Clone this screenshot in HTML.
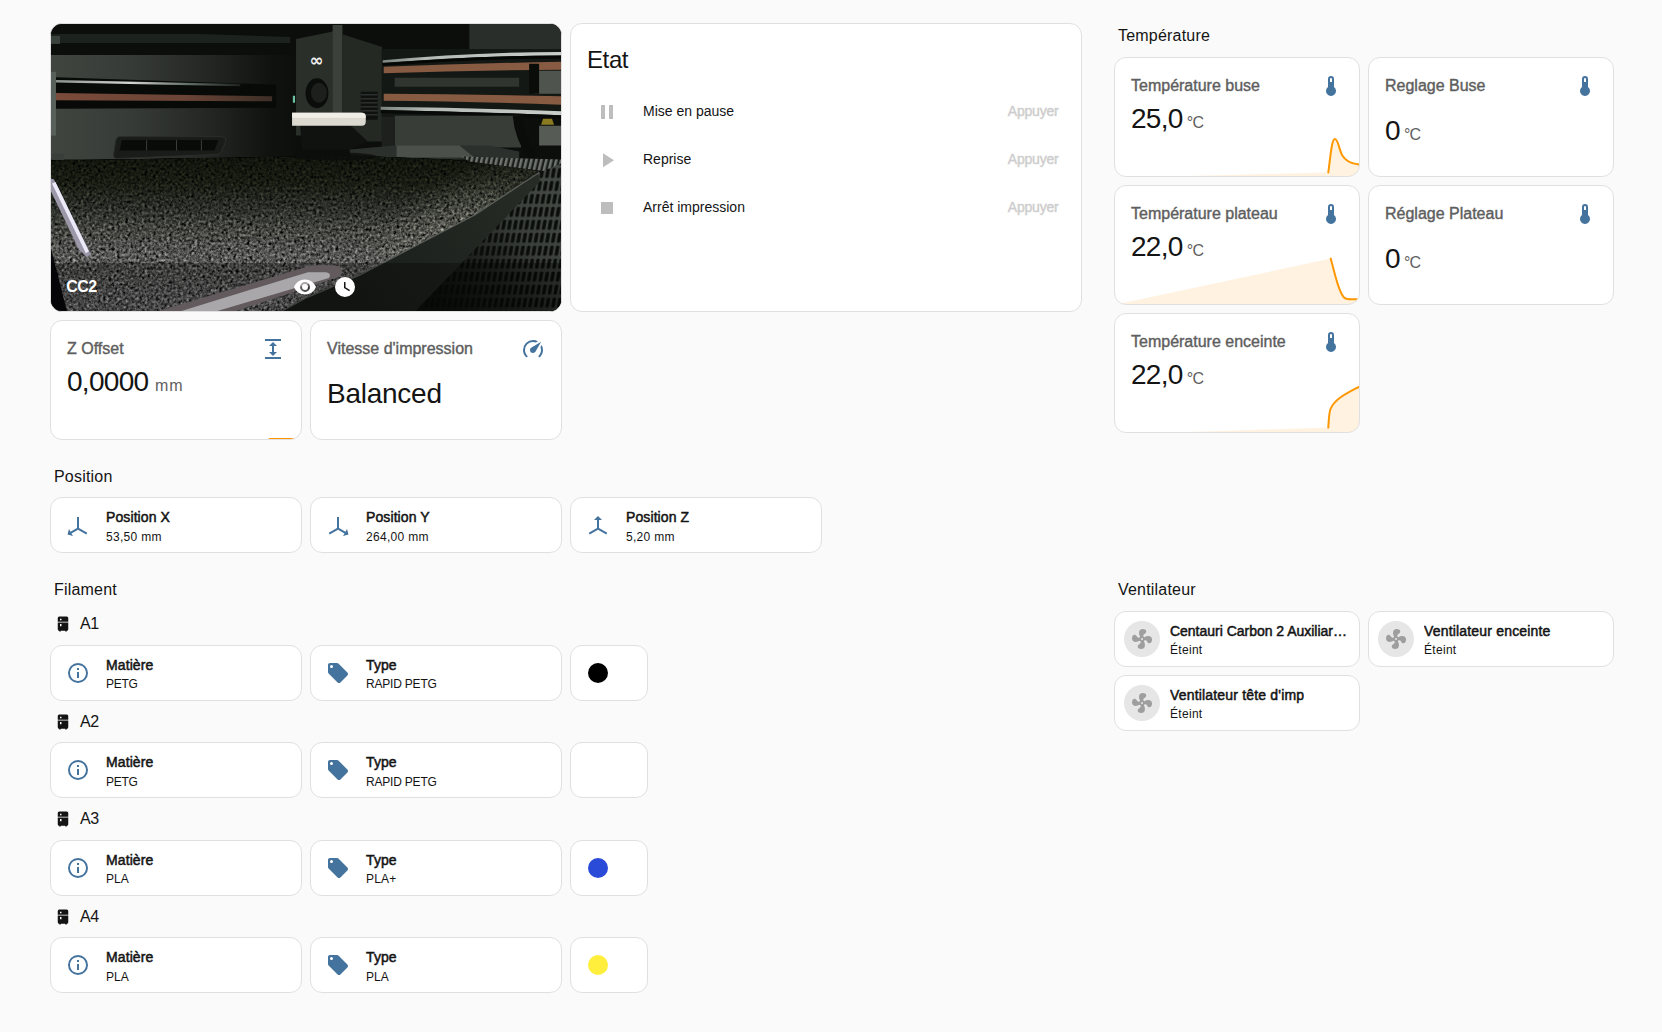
<!DOCTYPE html>
<html lang="fr">
<head>
<meta charset="utf-8">
<title>CC2</title>
<style>
*{box-sizing:border-box;margin:0;padding:0}
html,body{width:1662px;height:1032px;overflow:hidden;background:#fafafa}
body{position:relative;font-family:"Liberation Sans",sans-serif;color:#141414}
.card{position:absolute;background:#fff;border:1px solid #e0e0e0;border-radius:12px;overflow:hidden}
.h{position:absolute;font-size:16px;line-height:24px;white-space:nowrap;color:#141414;letter-spacing:.2px}
.t{position:absolute;white-space:nowrap}
.title{font-size:24px;line-height:40px;letter-spacing:-.4px}
.rown{font-size:14px;line-height:20px}
.press{font-size:14px;line-height:20px;color:#cdcdcd;-webkit-text-stroke:.4px #cdcdcd;letter-spacing:-.2px}
.camt{font-size:16px;line-height:24px;color:#fff;font-weight:700;letter-spacing:-.6px}
.foot{position:absolute;left:0;right:0;bottom:0;height:48px;background:rgba(0,0,0,.3)}
.tile .ic{position:absolute;left:15px;top:15px;width:24px;height:24px}
.tile .nm{position:absolute;left:55px;top:9px;font-size:14px;line-height:20px;-webkit-text-stroke:.5px #141414;letter-spacing:.1px;white-space:nowrap}
.tile .st{position:absolute;left:55px;top:30px;font-size:12px;line-height:16px;white-space:nowrap;letter-spacing:.3px}
.fan .circ{position:absolute;left:9px;top:9px;width:36px;height:36px;border-radius:50%;background:#e6e6e6;display:flex;align-items:center;justify-content:center}
.fan .nm{max-width:186px;overflow:hidden}
.dot{position:absolute;left:17px;top:17px;width:20px;height:20px;border-radius:50%}
.sens .nm{position:absolute;left:16px;top:15.5px;-webkit-text-stroke:.4px #5e5e5e;font-size:16px;line-height:24px;color:#5e5e5e;white-space:nowrap}
.sens .ic{position:absolute;right:16px;top:16px;width:24px;height:24px}
.sens .val{position:absolute;left:16px;font-size:28px;line-height:32px;white-space:nowrap;letter-spacing:-.7px}
.sens .val span{font-size:16px;color:#5e5e5e;margin-left:4px;letter-spacing:-.7px}
.sens .g{position:absolute;left:0;bottom:0}
</style>
</head>
<body>
<div class="card" id="cam" style="left:50px;top:23px;width:512px;height:289px;border-color:#e0e0e0;background:#1b1d1b">
<svg id="camsvg" width="510" height="287" viewBox="0 0 512 288" preserveAspectRatio="none" style="position:absolute;left:0;top:0">
<defs>
<linearGradient id="wallg" x1="0" x2="1" y1="0" y2="0"><stop offset="0" stop-color="#40453f"/><stop offset=".33" stop-color="#373b38"/><stop offset=".66" stop-color="#222522"/><stop offset=".9" stop-color="#0f120f"/><stop offset="1" stop-color="#0c0f0c"/></linearGradient>
<linearGradient id="bedg" x1="0" x2="0" y1="133" y2="288" gradientUnits="userSpaceOnUse"><stop offset="0" stop-color="#10140c"/><stop offset=".17" stop-color="#181c13"/><stop offset=".33" stop-color="#2b2e28"/><stop offset=".47" stop-color="#43443f"/><stop offset=".64" stop-color="#555554"/><stop offset="1" stop-color="#666666"/></linearGradient>
<linearGradient id="railhl" x1="0" x2="1"><stop offset="0" stop-color="#8c918e"/><stop offset=".4" stop-color="#d6d6d2"/><stop offset=".7" stop-color="#66726c"/><stop offset="1" stop-color="#1c211e"/></linearGradient>
<linearGradient id="copl" x1="0" x2="1"><stop offset="0" stop-color="#7a4a3a"/><stop offset=".6" stop-color="#6a4436"/><stop offset="1" stop-color="#3c2e26"/></linearGradient>
<filter id="speck" x="0" y="0" width="100%" height="100%" color-interpolation-filters="sRGB">
<feTurbulence type="fractalNoise" baseFrequency="0.36" numOctaves="2" seed="7" result="n"/>
<feColorMatrix in="n" type="matrix" values="0.8 0.8 0.8 0 -0.7  0.8 0.8 0.8 0 -0.7  0.8 0.8 0.8 0 -0.7  0 0 0 0 1" result="g"/>
<feGaussianBlur in="g" stdDeviation="0.55" result="gb"/><feComposite in="gb" in2="SourceGraphic" operator="arithmetic" k1="2" k2="0" k3="0" k4="0"/>
</filter>
<pattern id="mesh" width="5.8" height="13" patternUnits="userSpaceOnUse" patternTransform="skewX(-10)"><rect width="5.8" height="13" fill="#424742"/><rect x="1.2" y="1.3" width="3.4" height="10.4" rx="1.6" fill="#0a0c0a"/></pattern>
<pattern id="ribs" width="5" height="14" patternUnits="userSpaceOnUse" patternTransform="skewX(-14)"><rect width="5" height="14" fill="#1a1d1a"/><rect x="0" width="2.6" height="14" fill="#70746f"/></pattern>
<linearGradient id="meshd" x1="512" y1="190" x2="395" y2="280" gradientUnits="userSpaceOnUse"><stop offset="0" stop-color="#0a0c0a" stop-opacity="0"/><stop offset=".3" stop-color="#0a0c0a" stop-opacity=".15"/><stop offset=".62" stop-color="#0a0c0a" stop-opacity=".6"/><stop offset="1" stop-color="#0a0c0a" stop-opacity=".92"/></linearGradient>
<linearGradient id="rodg" x1="332" x2="512" y1="0" y2="0" gradientUnits="userSpaceOnUse"><stop offset="0" stop-color="#7c8480"/><stop offset=".25" stop-color="#b4bab6"/><stop offset="1" stop-color="#c9cecb"/></linearGradient>
<linearGradient id="bandg" x1="490" y1="150" x2="300" y2="288" gradientUnits="userSpaceOnUse"><stop offset="0" stop-color="#272c27"/><stop offset="1" stop-color="#191d19"/></linearGradient>
<radialGradient id="bedhl" cx="405" cy="214" r="1" gradientUnits="userSpaceOnUse" gradientTransform="translate(405 214) rotate(-30) scale(135 60) translate(-405 -214)"><stop offset="0" stop-color="#74746c" stop-opacity=".62"/><stop offset=".5" stop-color="#66665e" stop-opacity=".36"/><stop offset="1" stop-color="#55554e" stop-opacity="0"/></radialGradient>
</defs>
<rect width="512" height="288" fill="#0b0e0b"/>
<!-- top band lighter strip -->
<path d="M0 10H150L240 13V19L150 19H0Z" fill="#1c221e"/>
<rect x="0" y="12" width="9" height="8" fill="#3a423c"/>
<!-- wall left -->
<path d="M0 31H245V136H0Z" fill="url(#wallg)"/>
<rect x="0" y="48" width="5" height="64" fill="#59605b"/><rect x="1" y="130" width="12" height="8" fill="#3a3e3a"/>
<!-- left rail -->
<path d="M5 53.5L226 61V84L5 85Z" fill="#070a07"/>
<path d="M5 56.3L190 60.2V62.4L5 58.7Z" fill="url(#railhl)"/>
<path d="M5 69.3L222 72.6V77.6L5 76.6Z" fill="url(#copl)"/>
<!-- vent -->
<path d="M69 113H170Q177 113 175 119L171 128Q170 131 164 131L66 135Q62 135 63 130L65 117Q66 113 69 113Z" fill="#191c19" stroke="#2a2e2a" stroke-width="1"/>
<path d="M71 116.5H168L164 127H69Z" fill="#090b09"/><path d="M96 116.5V127M126 116.5V127M151 116.5V127" stroke="#3a3e3a" stroke-width="1"/>
<!-- printhead -->
<path d="M246 15L283 7.5V112H246Z" fill="#2a2f2a"/>
<path d="M282.7 1H292.6V113H282.7Z" fill="#3b403a"/>
<path d="M292.6 10.4L332.5 23V118H292.6Z" fill="#242924"/>
<ellipse cx="267" cy="69.5" rx="11.5" ry="15" fill="#0b0d0b"/><ellipse cx="269" cy="69" rx="8" ry="10" fill="#1c1f1c"/><rect x="242.8" y="72" width="2.2" height="7" fill="#6cc4a4"/>
<path d="M311 68H328V96H311Z" fill="#0f110f"/>
<path d="M311 71H328M311 75H328M311 79H328M311 83H328M311 87H328M311 91H328" stroke="#2c302c" stroke-width="1.4"/>
<text x="266.5" y="42.5" font-family="'DejaVu Sans','Liberation Sans',sans-serif" font-size="17" font-weight="bold" fill="#f2f2f2" text-anchor="middle">∞</text>
<path d="M250 101H300L318 118L300 126H252Z" fill="#101210"/>
<path d="M242 89H312Q316 89 316 93V98Q316 102 312 102H242Z" fill="#dcdad0"/>
<path d="M242 89H312Q316 89 316 93V94H242Z" fill="#f0eee6"/>
<!-- right: top area -->
<path d="M420 0H512V25H420Z" fill="#2a2e2a"/>
<path d="M332 25H512V93H332Z" fill="#141814"/>
<!-- upper rod -->
<path d="M333 36.5Q420 28.5 512 28V31.5Q420 32 333 39Z" fill="url(#rodg)"/>
<path d="M333 39.5Q420 32 512 31.5V34.5Q420 35 333 42Z" fill="#050705"/>
<!-- belts -->
<path d="M334 43Q420 39.5 512 38V46Q420 46.5 334 49.5Z" fill="#875a42"/>
<path d="M345 54H470V63H345Z" fill="#30352f"/>
<path d="M334 70Q420 70.5 512 72.5V81Q420 77.5 334 77Z" fill="#875a42"/>
<!-- right mech parts -->
<path d="M485 47H512V70H485Z" fill="#50544e"/>
<path d="M480 40H490V70H480Z" fill="#0a0c0a"/>
<!-- lower rod -->
<path d="M331 83Q420 84 512 87.5V91.5Q420 88 331 86Z" fill="url(#rodg)"/>
<path d="M331 86.5Q420 88 512 91.5V95Q420 91.5 331 89.5Z" fill="#080a08"/>
<!-- panel below rod -->
<path d="M345 92H472V124H345Z" fill="#383d38"/>
<path d="M332 93H345V124H332Z" fill="#1d201d"/>
<path d="M490 102H512V122H490Z" fill="#575b55"/>
<path d="M468 92Q470 115 484 134" stroke="#0a0c0a" stroke-width="9" fill="none"/>
<path d="M494 95L503 95L505 101L492 101Z" fill="#8a7a20"/>
<!-- platform slab -->
<path d="M300 126L345 122H440L470 128V136H300Z" fill="#2c302c"/>
<path d="M347 122H410L425 134H347Z" fill="#4c504b"/>
<!-- bed -->
<g filter="url(#speck)"><path d="M0 137L120 135L245 133L300 132L400 136L488 147Q492 148 489 150L425 192L371 220L310 252L256 275L232 288H0Z" fill="url(#bedg)"/><path d="M0 137L120 135L245 133L300 132L400 136L488 147Q492 148 489 150L425 192L371 220L310 252L256 275L232 288H0Z" fill="url(#bedhl)"/></g>
<!-- printhead shadow on bed -->
<ellipse cx="285" cy="133" rx="42" ry="4" fill="#0c0e0c" opacity=".8"/>
<!-- rib grid -->
<path d="M412 133L512 136V150L490 147L420 138Z" fill="url(#ribs)"/>
<!-- frame band & mesh -->
<path d="M488 150L512 140V288H355Z" fill="url(#mesh)"/><path d="M488 150L512 140V288H355Z" fill="url(#meshd)"/>
<path d="M489 150L425 192L371 220L310 252L256 275L232 288H366L390 263L491 158Z" fill="url(#bandg)"/>
<path d="M490 149L425 192L371 220L310 252L256 275L232 288" stroke="#5a5f5a" stroke-width="1.2" fill="none"/>
<!-- handle -->
<path d="M262 242H285Q292 243 292 248Q292 253 286 255L185 288H108Z" fill="#8e8286"/>
<path d="M258 249H276Q282 250 279 255L167 288H131Z" fill="#f4f0f4"/>
<!-- white streak left -->
<path d="M0 155L3 156L40 231L36 234L28 226L0 168Z" fill="#9c98aa"/><path d="M1 160L4.5 158.5L38 228L35 230Z" fill="#eceaf8"/>
<path d="M0 225L16 288H0Z" fill="#08080c"/>
</svg>

<div class="foot"></div>
<div class="t camt" style="left:15.3px;top:251px">CC2</div>
<svg class="" viewBox="0 0 24 24" style="position:absolute;left:241.7px;top:251px;width:24px;height:24px"><path fill="#fff" d="M12,9A3,3 0 0,0 9,12A3,3 0 0,0 12,15A3,3 0 0,0 15,12A3,3 0 0,0 12,9M12,17A5,5 0 0,1 7,12A5,5 0 0,1 12,7A5,5 0 0,1 17,12A5,5 0 0,1 12,17M12,4.5C7,4.5 2.73,7.61 1,12C2.73,16.39 7,19.5 12,19.5C17,19.5 21.27,16.39 23,12C21.27,7.61 17,4.5 12,4.5Z"/></svg>
<svg class="" viewBox="0 0 24 24" style="position:absolute;left:281.7px;top:250.5px;width:24px;height:24px"><path fill="#fff" d="M12,2A10,10 0 0,0 2,12A10,10 0 0,0 12,22A10,10 0 0,0 22,12A10,10 0 0,0 12,2M16.2,16.2L11,13V7H12.5V12.2L17,14.9L16.2,16.2Z"/></svg>
</div>
<div class="card" id="etat" style="left:570px;top:23px;width:512px;height:289px">
<div class="t title" style="left:16px;top:16px">Etat</div>
<svg class="" viewBox="0 0 24 24" style="position:absolute;left:24px;top:76px;width:24px;height:24px"><path fill="#bdbdbd" d="M14,19H18V5H14M6,19H10V5H6V19Z"/></svg>
<div class="t rown" style="left:72px;top:77px">Mise en pause</div>
<div class="t press" style="right:22.5px;top:77px">Appuyer</div>
<svg class="" viewBox="0 0 24 24" style="position:absolute;left:24px;top:124px;width:24px;height:24px"><path fill="#bdbdbd" d="M8,5.14V19.14L19,12.14L8,5.14Z"/></svg>
<div class="t rown" style="left:72px;top:125px">Reprise</div>
<div class="t press" style="right:22.5px;top:125px">Appuyer</div>
<svg class="" viewBox="0 0 24 24" style="position:absolute;left:24px;top:172px;width:24px;height:24px"><path fill="#bdbdbd" d="M18,18H6V6H18V18Z"/></svg>
<div class="t rown" style="left:72px;top:173px">Arrêt impression</div>
<div class="t press" style="right:22.5px;top:173px">Appuyer</div>
</div>
<div class="card sens" id="zoff" style="left:50px;top:320px;width:252px;height:120px">
<div class="nm">Z Offset</div><svg class="ic" viewBox="0 0 24 24" style=""><path fill="#44739e" d="M13,9V15H16L12,19L8,15H11V9H8L12,5L16,9H13M4,2H20V4H4V2M4,20H20V22H4V20Z"/></svg>
<div class="val" style="top:44.5px">0,0000<span style="letter-spacing:.9px;margin-left:6.5px">mm</span></div>
<svg class="g" width="250" height="30" viewBox="0 0 250 30"><path d="M217.8 29.5H243" stroke="#ff9800" stroke-width="1.2" fill="none"/></svg>
</div>
<div class="card sens" id="vit" style="left:310px;top:320px;width:252px;height:120px">
<div class="nm">Vitesse d'impression</div><svg class="ic" viewBox="0 0 24 24" style=""><path fill="#44739e" d="M12,16A3,3 0 0,1 9,13C9,11.88 9.61,10.9 10.5,10.39L20.21,4.77L14.68,14.35C14.18,15.33 13.17,16 12,16M12,3C13.81,3 15.5,3.5 16.97,4.32L14.87,5.53C14,5.19 13,5 12,5A8,8 0 0,0 4,13C4,15.21 4.89,17.21 6.34,18.65H6.35C6.74,19.04 6.74,19.67 6.35,20.06C5.96,20.45 5.32,20.45 4.93,20.07V20.07C3.12,18.26 2,15.76 2,13A10,10 0 0,1 12,3M22,13C22,15.76 20.88,18.26 19.07,20.07V20.07C18.68,20.45 18.05,20.45 17.66,20.06C17.27,19.67 17.27,19.04 17.66,18.65V18.65C19.11,17.2 20,15.21 20,13C20,12 19.81,11 19.46,10.1L20.67,8C21.5,9.5 22,11.18 22,13Z"/></svg>
<div class="val" style="top:56.5px;letter-spacing:-.25px">Balanced</div>
</div>
<div class="h" style="left:54px;top:465px">Position</div>
<div class="h" style="left:54px;top:578px">Filament</div>
<div class="h" style="left:1118px;top:24px">Température</div>
<div class="h" style="left:1118px;top:578px">Ventilateur</div>
<div class="card tile" style="left:50px;top:497px;width:252px;height:56px"><svg class="ic" viewBox="0 0 24 24" style=""><path fill="#44739e" d="M1.5,21.55L3,16.08L4.47,18.66L11,14.9V4H13V14.9L21.27,19.66L20.27,21.4L12,16.63L5.47,20.4L7,23.01L1.5,21.55Z"/></svg><div class="nm">Position X</div><div class="st" style="top:31px;letter-spacing:0.3px">53,50 mm</div></div>
<div class="card tile" style="left:310px;top:497px;width:252px;height:56px"><svg class="ic" viewBox="0 0 24 24" style=""><path fill="#44739e" d="M22.5,21.55L17,23.01L18.53,20.4L12,16.63L3.73,21.4L2.73,19.66L11,14.9V4H13V14.9L19.53,18.66L21,16.08L22.5,21.55Z"/></svg><div class="nm">Position Y</div><div class="st" style="top:31px;letter-spacing:0.3px">264,00 mm</div></div>
<div class="card tile" style="left:570px;top:497px;width:252px;height:56px"><svg class="ic" viewBox="0 0 24 24" style=""><path fill="#44739e" d="M12,3L16,7H13V14.9L21.27,19.66L20.27,21.4L12,16.63L3.73,21.4L2.73,19.66L11,14.9V7H8L12,3Z"/></svg><div class="nm">Position Z</div><div class="st" style="top:31px;letter-spacing:0.3px">5,20 mm</div></div>
<svg class="" viewBox="0 0 24 24" style="position:absolute;left:54px;top:615px;width:18px;height:18px"><path fill="#141414" d="M7,2H17A2,2 0 0,1 19,4V9H5V4A2,2 0 0,1 7,2M19,19A2,2 0 0,1 17,21V22H15V21H9V22H7V21A2,2 0 0,1 5,19V10H19V19M8,5V7H10V5H8M8,12V15H10V12H8Z"/></svg>
<div class="h" style="left:80px;top:612px;letter-spacing:-0.5px">A1</div>
<div class="card tile" style="left:50px;top:645px;width:252px;height:56px"><svg class="ic" viewBox="0 0 24 24" style=""><path fill="#44739e" d="M11,9H13V7H11M12,20C7.59,20 4,16.41 4,12C4,7.59 7.59,4 12,4C16.41,4 20,7.59 20,12C20,16.41 16.41,20 12,20M12,2A10,10 0 0,0 2,12A10,10 0 0,0 12,22A10,10 0 0,0 22,12A10,10 0 0,0 12,2M11,17H13V11H11V17Z"/></svg><div class="nm">Matière</div><div class="st" style="top:30px;letter-spacing:-0.3px">PETG</div></div>
<div class="card tile" style="left:310px;top:645px;width:252px;height:56px"><svg class="ic" viewBox="0 0 24 24" style=""><path fill="#44739e" d="M5.5,7A1.5,1.5 0 0,1 4,5.5A1.5,1.5 0 0,1 5.5,4A1.5,1.5 0 0,1 7,5.5A1.5,1.5 0 0,1 5.5,7M21.41,11.58L12.41,2.58C12.05,2.22 11.55,2 11,2H4C2.89,2 2,2.89 2,4V11C2,11.55 2.22,12.05 2.59,12.41L11.58,21.41C11.95,21.77 12.45,22 13,22C13.55,22 14.05,21.77 14.41,21.41L21.41,14.41C21.78,14.05 22,13.55 22,13C22,12.44 21.77,11.94 21.41,11.58Z"/></svg><div class="nm">Type</div><div class="st" style="top:30px;letter-spacing:-0.2px">RAPID PETG</div></div>
<div class="card" style="left:570px;top:645px;width:78px;height:56px"><div class="dot" style="background:#000000"></div></div>
<svg class="" viewBox="0 0 24 24" style="position:absolute;left:54px;top:712.5px;width:18px;height:18px"><path fill="#141414" d="M7,2H17A2,2 0 0,1 19,4V9H5V4A2,2 0 0,1 7,2M19,19A2,2 0 0,1 17,21V22H15V21H9V22H7V21A2,2 0 0,1 5,19V10H19V19M8,5V7H10V5H8M8,12V15H10V12H8Z"/></svg>
<div class="h" style="left:80px;top:710.0px;letter-spacing:-0.5px">A2</div>
<div class="card tile" style="left:50px;top:742px;width:252px;height:56px"><svg class="ic" viewBox="0 0 24 24" style=""><path fill="#44739e" d="M11,9H13V7H11M12,20C7.59,20 4,16.41 4,12C4,7.59 7.59,4 12,4C16.41,4 20,7.59 20,12C20,16.41 16.41,20 12,20M12,2A10,10 0 0,0 2,12A10,10 0 0,0 12,22A10,10 0 0,0 22,12A10,10 0 0,0 12,2M11,17H13V11H11V17Z"/></svg><div class="nm">Matière</div><div class="st" style="top:31px;letter-spacing:-0.3px">PETG</div></div>
<div class="card tile" style="left:310px;top:742px;width:252px;height:56px"><svg class="ic" viewBox="0 0 24 24" style=""><path fill="#44739e" d="M5.5,7A1.5,1.5 0 0,1 4,5.5A1.5,1.5 0 0,1 5.5,4A1.5,1.5 0 0,1 7,5.5A1.5,1.5 0 0,1 5.5,7M21.41,11.58L12.41,2.58C12.05,2.22 11.55,2 11,2H4C2.89,2 2,2.89 2,4V11C2,11.55 2.22,12.05 2.59,12.41L11.58,21.41C11.95,21.77 12.45,22 13,22C13.55,22 14.05,21.77 14.41,21.41L21.41,14.41C21.78,14.05 22,13.55 22,13C22,12.44 21.77,11.94 21.41,11.58Z"/></svg><div class="nm">Type</div><div class="st" style="top:31px;letter-spacing:-0.2px">RAPID PETG</div></div>
<div class="card" style="left:570px;top:742px;width:78px;height:56px"><div class="dot" style="background:#ffffff"></div></div>
<svg class="" viewBox="0 0 24 24" style="position:absolute;left:54px;top:810px;width:18px;height:18px"><path fill="#141414" d="M7,2H17A2,2 0 0,1 19,4V9H5V4A2,2 0 0,1 7,2M19,19A2,2 0 0,1 17,21V22H15V21H9V22H7V21A2,2 0 0,1 5,19V10H19V19M8,5V7H10V5H8M8,12V15H10V12H8Z"/></svg>
<div class="h" style="left:80px;top:807px;letter-spacing:-0.5px">A3</div>
<div class="card tile" style="left:50px;top:840px;width:252px;height:56px"><svg class="ic" viewBox="0 0 24 24" style=""><path fill="#44739e" d="M11,9H13V7H11M12,20C7.59,20 4,16.41 4,12C4,7.59 7.59,4 12,4C16.41,4 20,7.59 20,12C20,16.41 16.41,20 12,20M12,2A10,10 0 0,0 2,12A10,10 0 0,0 12,22A10,10 0 0,0 22,12A10,10 0 0,0 12,2M11,17H13V11H11V17Z"/></svg><div class="nm">Matière</div><div class="st" style="top:30px;letter-spacing:0px">PLA</div></div>
<div class="card tile" style="left:310px;top:840px;width:252px;height:56px"><svg class="ic" viewBox="0 0 24 24" style=""><path fill="#44739e" d="M5.5,7A1.5,1.5 0 0,1 4,5.5A1.5,1.5 0 0,1 5.5,4A1.5,1.5 0 0,1 7,5.5A1.5,1.5 0 0,1 5.5,7M21.41,11.58L12.41,2.58C12.05,2.22 11.55,2 11,2H4C2.89,2 2,2.89 2,4V11C2,11.55 2.22,12.05 2.59,12.41L11.58,21.41C11.95,21.77 12.45,22 13,22C13.55,22 14.05,21.77 14.41,21.41L21.41,14.41C21.78,14.05 22,13.55 22,13C22,12.44 21.77,11.94 21.41,11.58Z"/></svg><div class="nm">Type</div><div class="st" style="top:30px;letter-spacing:0.2px">PLA+</div></div>
<div class="card" style="left:570px;top:840px;width:78px;height:56px"><div class="dot" style="background:#2a4bd7"></div></div>
<svg class="" viewBox="0 0 24 24" style="position:absolute;left:54px;top:907.5px;width:18px;height:18px"><path fill="#141414" d="M7,2H17A2,2 0 0,1 19,4V9H5V4A2,2 0 0,1 7,2M19,19A2,2 0 0,1 17,21V22H15V21H9V22H7V21A2,2 0 0,1 5,19V10H19V19M8,5V7H10V5H8M8,12V15H10V12H8Z"/></svg>
<div class="h" style="left:80px;top:905.0px;letter-spacing:-0.5px">A4</div>
<div class="card tile" style="left:50px;top:937px;width:252px;height:56px"><svg class="ic" viewBox="0 0 24 24" style=""><path fill="#44739e" d="M11,9H13V7H11M12,20C7.59,20 4,16.41 4,12C4,7.59 7.59,4 12,4C16.41,4 20,7.59 20,12C20,16.41 16.41,20 12,20M12,2A10,10 0 0,0 2,12A10,10 0 0,0 12,22A10,10 0 0,0 22,12A10,10 0 0,0 12,2M11,17H13V11H11V17Z"/></svg><div class="nm">Matière</div><div class="st" style="top:31px;letter-spacing:0px">PLA</div></div>
<div class="card tile" style="left:310px;top:937px;width:252px;height:56px"><svg class="ic" viewBox="0 0 24 24" style=""><path fill="#44739e" d="M5.5,7A1.5,1.5 0 0,1 4,5.5A1.5,1.5 0 0,1 5.5,4A1.5,1.5 0 0,1 7,5.5A1.5,1.5 0 0,1 5.5,7M21.41,11.58L12.41,2.58C12.05,2.22 11.55,2 11,2H4C2.89,2 2,2.89 2,4V11C2,11.55 2.22,12.05 2.59,12.41L11.58,21.41C11.95,21.77 12.45,22 13,22C13.55,22 14.05,21.77 14.41,21.41L21.41,14.41C21.78,14.05 22,13.55 22,13C22,12.44 21.77,11.94 21.41,11.58Z"/></svg><div class="nm">Type</div><div class="st" style="top:31px;letter-spacing:0px">PLA</div></div>
<div class="card" style="left:570px;top:937px;width:78px;height:56px"><div class="dot" style="background:#ffee3b"></div></div>
<div class="card sens" style="left:1114px;top:57px;width:246px;height:120px"><div class="nm">Température buse</div><svg class="ic" viewBox="0 0 24 24" style=""><path fill="#44739e" d="M15 13V5A3 3 0 0 0 9 5V13A5 5 0 1 0 15 13M12 4A1 1 0 0 1 13 5V8H11V5A1 1 0 0 1 12 4Z"/></svg><div class="val" style="top:44.5px">25,0<span>°C</span></div><svg class="g" width="244" height="60" viewBox="0 0 244 60"><path d="M72 60L213.3 56.4C215 45 216.5 23.1 219.9 23.1C223 23.1 224 33 227 39C231 46 238 48 244 48.6V60Z" fill="#ff9800" fill-opacity=".12"/><path d="M213.3 56.4C215 45 216.5 23.1 219.9 23.1C223 23.1 224 33 227 39C231 46 238 48 244 48.6" fill="none" stroke="#ff9800" stroke-width="2" stroke-linecap="round"/></svg>
</div>
<div class="card sens" style="left:1368px;top:57px;width:246px;height:120px"><div class="nm">Reglage Buse</div><svg class="ic" viewBox="0 0 24 24" style=""><path fill="#44739e" d="M15 13V5A3 3 0 0 0 9 5V13A5 5 0 1 0 15 13M12 4A1 1 0 0 1 13 5V8H11V5A1 1 0 0 1 12 4Z"/></svg><div class="val" style="top:56.5px">0<span>°C</span></div></div>
<div class="card sens" style="left:1114px;top:185px;width:246px;height:120px"><div class="nm">Température plateau</div><svg class="ic" viewBox="0 0 24 24" style=""><path fill="#44739e" d="M15 13V5A3 3 0 0 0 9 5V13A5 5 0 1 0 15 13M12 4A1 1 0 0 1 13 5V8H11V5A1 1 0 0 1 12 4Z"/></svg><div class="val" style="top:44.5px">22,0<span>°C</span></div><svg class="g" width="244" height="60" viewBox="0 0 244 60"><path d="M3 60L215.7 14.6L220.4 32.2C223 42 226 50 229 53.5C231 55.3 233 55.3 236 55.3L244 55.3V60Z" fill="#ff9800" fill-opacity=".12"/><path d="M215.7 14.6L220.4 32.2C223 42 226 50 229 53.5C231 55.3 233 55.3 236 55.3L244 55.3" fill="none" stroke="#ff9800" stroke-width="2" stroke-linecap="round"/></svg>
</div>
<div class="card sens" style="left:1368px;top:185px;width:246px;height:120px"><div class="nm">Réglage Plateau</div><svg class="ic" viewBox="0 0 24 24" style=""><path fill="#44739e" d="M15 13V5A3 3 0 0 0 9 5V13A5 5 0 1 0 15 13M12 4A1 1 0 0 1 13 5V8H11V5A1 1 0 0 1 12 4Z"/></svg><div class="val" style="top:56.5px">0<span>°C</span></div></div>
<div class="card sens" style="left:1114px;top:313px;width:246px;height:120px"><div class="nm">Température enceinte</div><svg class="ic" viewBox="0 0 24 24" style=""><path fill="#44739e" d="M15 13V5A3 3 0 0 0 9 5V13A5 5 0 1 0 15 13M12 4A1 1 0 0 1 13 5V8H11V5A1 1 0 0 1 12 4Z"/></svg><div class="val" style="top:44.5px">22,0<span>°C</span></div><svg class="g" width="244" height="60" viewBox="0 0 244 60"><path d="M72 60L213.3 55.6C213.8 47 214 41 215.5 37C217.5 32 221 28.5 226 25C232 21 238 18 244.5 14.5V60Z" fill="#ff9800" fill-opacity=".12"/><path d="M213.3 55.6C213.8 47 214 41 215.5 37C217.5 32 221 28.5 226 25C232 21 238 18 244.5 14.5" fill="none" stroke="#ff9800" stroke-width="2" stroke-linecap="round"/></svg>
</div>
<div class="card tile fan" style="left:1114px;top:611px;width:246px;height:56px"><div class="circ"><svg class="" viewBox="0 0 24 24" style="width:24px;height:24px"><path fill="#9e9e9e" d="M12,11A1,1 0 0,0 11,12A1,1 0 0,0 12,13A1,1 0 0,0 13,12A1,1 0 0,0 12,11M12.5,2C17,2 17.11,5.57 14.75,6.75C13.76,7.24 13.32,8.29 13.13,9.22C13.61,9.42 14.03,9.73 14.35,10.13C18.05,8.13 22.03,8.92 22.03,12.5C22.03,17 18.46,17.1 17.28,14.73C16.78,13.74 15.72,13.3 14.79,13.11C14.59,13.59 14.28,14 13.88,14.34C15.87,18.03 15.08,22 11.5,22C7,22 6.91,18.42 9.27,17.24C10.25,16.75 10.69,15.71 10.89,14.79C10.4,14.59 9.97,14.27 9.65,13.87C5.96,15.85 2,15.07 2,11.5C2,7 5.56,6.89 6.74,9.26C7.24,10.25 8.29,10.68 9.22,10.87C9.41,10.39 9.73,9.97 10.14,9.65C8.15,5.96 8.94,2 12.5,2Z"/></svg></div><div class="nm" style="letter-spacing:-0.02px">Centauri Carbon 2 Auxiliar…</div><div class="st">Éteint</div></div>
<div class="card tile fan" style="left:1368px;top:611px;width:246px;height:56px"><div class="circ"><svg class="" viewBox="0 0 24 24" style="width:24px;height:24px"><path fill="#9e9e9e" d="M12,11A1,1 0 0,0 11,12A1,1 0 0,0 12,13A1,1 0 0,0 13,12A1,1 0 0,0 12,11M12.5,2C17,2 17.11,5.57 14.75,6.75C13.76,7.24 13.32,8.29 13.13,9.22C13.61,9.42 14.03,9.73 14.35,10.13C18.05,8.13 22.03,8.92 22.03,12.5C22.03,17 18.46,17.1 17.28,14.73C16.78,13.74 15.72,13.3 14.79,13.11C14.59,13.59 14.28,14 13.88,14.34C15.87,18.03 15.08,22 11.5,22C7,22 6.91,18.42 9.27,17.24C10.25,16.75 10.69,15.71 10.89,14.79C10.4,14.59 9.97,14.27 9.65,13.87C5.96,15.85 2,15.07 2,11.5C2,7 5.56,6.89 6.74,9.26C7.24,10.25 8.29,10.68 9.22,10.87C9.41,10.39 9.73,9.97 10.14,9.65C8.15,5.96 8.94,2 12.5,2Z"/></svg></div><div class="nm" style="letter-spacing:0.18px">Ventilateur enceinte</div><div class="st">Éteint</div></div>
<div class="card tile fan" style="left:1114px;top:675px;width:246px;height:56px"><div class="circ"><svg class="" viewBox="0 0 24 24" style="width:24px;height:24px"><path fill="#9e9e9e" d="M12,11A1,1 0 0,0 11,12A1,1 0 0,0 12,13A1,1 0 0,0 13,12A1,1 0 0,0 12,11M12.5,2C17,2 17.11,5.57 14.75,6.75C13.76,7.24 13.32,8.29 13.13,9.22C13.61,9.42 14.03,9.73 14.35,10.13C18.05,8.13 22.03,8.92 22.03,12.5C22.03,17 18.46,17.1 17.28,14.73C16.78,13.74 15.72,13.3 14.79,13.11C14.59,13.59 14.28,14 13.88,14.34C15.87,18.03 15.08,22 11.5,22C7,22 6.91,18.42 9.27,17.24C10.25,16.75 10.69,15.71 10.89,14.79C10.4,14.59 9.97,14.27 9.65,13.87C5.96,15.85 2,15.07 2,11.5C2,7 5.56,6.89 6.74,9.26C7.24,10.25 8.29,10.68 9.22,10.87C9.41,10.39 9.73,9.97 10.14,9.65C8.15,5.96 8.94,2 12.5,2Z"/></svg></div><div class="nm" style="letter-spacing:0.18px">Ventilateur tête d'imp</div><div class="st">Éteint</div></div>
</body>
</html>
